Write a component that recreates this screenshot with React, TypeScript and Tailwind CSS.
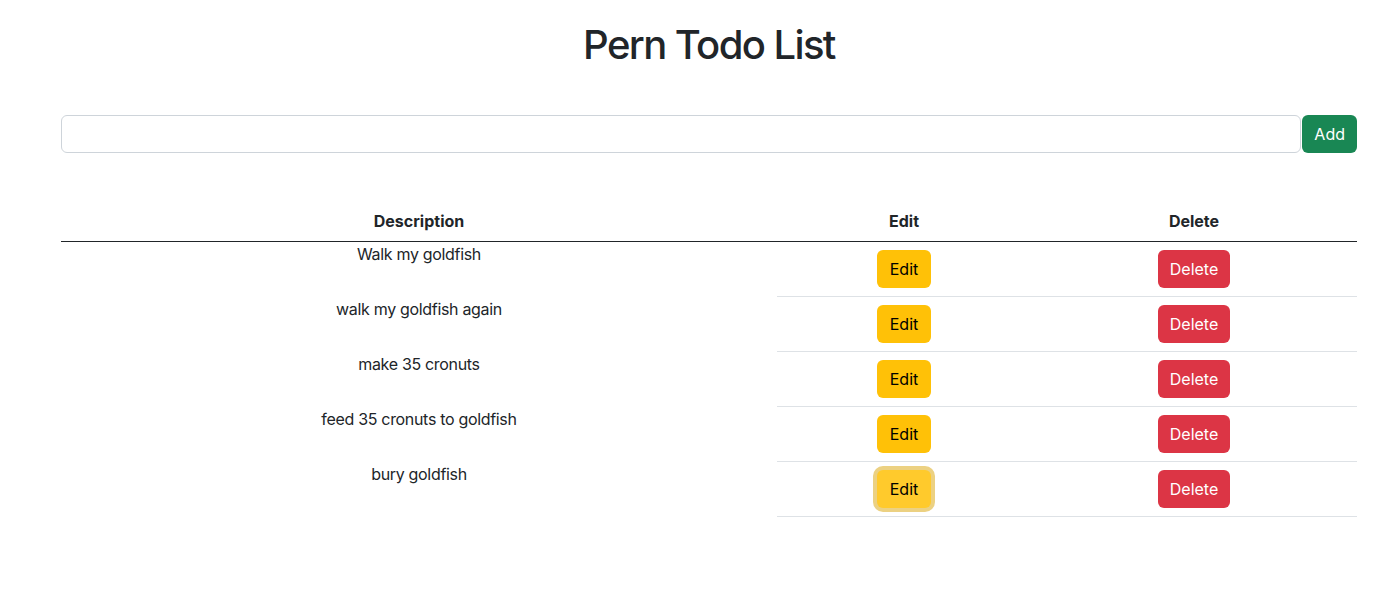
const todos = [
  "Walk my goldfish",
  "walk my goldfish again",
  "make 35 cronuts",
  "feed 35 cronuts to goldfish",
  "bury goldfish",
];

export default function App() {
  return (
    <div
      className="min-h-[601px] bg-white text-[#212529] text-base"
      style={{ fontFamily: "Inter, 'Noto Sans', sans-serif" }}
    >
      <div className="ml-[61px] w-[1296px] pt-[21px]">
        <h1 className="text-center text-[40px] leading-[48px] font-medium tracking-[-0.04em]">
          Pern Todo List
        </h1>

        <form className="mt-[46px] flex gap-px" onSubmit={(e) => e.preventDefault()}>
          <input
            type="text"
            className="h-[38px] flex-1 rounded-md border border-[#ced4da] px-3 outline-none"
          />
          <button className="h-[38px] rounded-md bg-[#198754] px-3 text-white">
            Add
          </button>
        </form>

        <table className="mt-[48px] w-full border-collapse text-center">
          <thead>
            <tr className="border-b border-[#212529]">
              <th className="w-[716px] px-2 py-2 leading-6 font-bold">Description</th>
              <th className="w-[254px] px-2 py-2 leading-6 font-bold">Edit</th>
              <th className="px-2 py-2 leading-6 font-bold">Delete</th>
            </tr>
          </thead>
          <tbody>
            {todos.map((todo, i) => (
              <tr key={i}>
                <td className="p-0 align-top leading-6 tracking-[-0.02em]">{todo}</td>
                <td className="border-b border-[#dee2e6] px-2 py-2">
                  <button
                    className={
                      i === todos.length - 1
                        ? "h-[38px] rounded-md bg-[#ffca2c] px-[13px] leading-6 text-black ring-4 ring-[#ecd182]"
                        : "h-[38px] rounded-md bg-[#ffc107] px-[13px] leading-6 text-black"
                    }
                  >
                    Edit
                  </button>
                </td>
                <td className="border-b border-[#dee2e6] px-2 py-2">
                  <button className="h-[38px] rounded-md bg-[#dc3545] px-3 leading-6 text-white">
                    Delete
                  </button>
                </td>
              </tr>
            ))}
          </tbody>
        </table>
      </div>
    </div>
  );
}
